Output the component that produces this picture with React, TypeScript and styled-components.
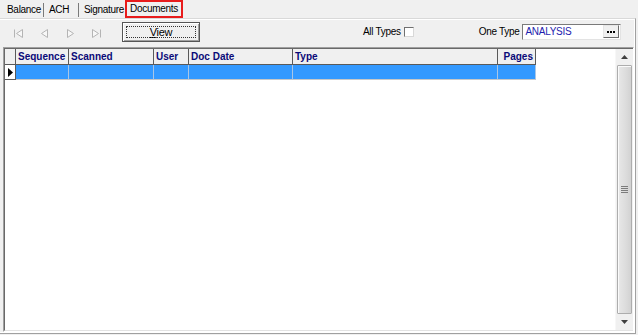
import React from 'react'
import styled, { createGlobalStyle } from 'styled-components'

const GlobalStyle = createGlobalStyle`
  html, body {
    margin: 0;
    padding: 0;
    background: #f0f0f0;
  }
  body {
    font-family: "Liberation Sans", Arial, sans-serif;
    font-size: 10px;
    letter-spacing: -0.3px;
    color: #000;
    white-space: nowrap;
  }
`

const columns = [
  { label: 'Sequence', width: 53 },
  { label: 'Scanned', width: 85 },
  { label: 'User', width: 35 },
  { label: 'Doc Date', width: 104 },
  { label: 'Type', width: 205 },
  { label: 'Pages', width: 38, align: 'right' }
]

const tabs = [
  { label: 'Balance', width: 41, pad: 4, divider: true },
  { label: 'ACH', width: 35, pad: 5, divider: true },
  { label: 'Signature', width: 46, pad: 5 },
  { label: 'Documents', width: 58, active: true }
]

const StyledWindow = styled('div')`
  width: 638px;
  height: 335px;
  display: flex;
  flex-direction: column;
  background: #f0f0f0;
  overflow: hidden;
`

const StyledTabStrip = styled('div')`
  height: 18px;
  display: flex;
  align-items: flex-start;
  padding-left: 3px;
`

const StyledTab = styled('div')<{ pad?: number; w: number; divider?: boolean }>`
  width: ${(p) => p.w}px;
  box-sizing: border-box;
  height: 14px;
  margin-top: 3px;
  padding-left: ${(p) => p.pad || 0}px;
  line-height: 14px;
  border-right: ${(p) => (p.divider ? '1px solid #7a7a7a' : 'none')};
`

const StyledActiveTab = styled('div')<{ w: number }>`
  width: ${(p) => p.w}px;
  box-sizing: border-box;
  height: 18px;
  border: 2px solid #e81c1c;
  display: flex;
  align-items: flex-start;
  justify-content: center;
  padding-top: 1px;
  line-height: 12px;
`

const StyledPanel = styled('div')`
  flex: 1;
  display: flex;
  flex-direction: column;
  border-top: 1px solid #d9d9d9;
  border-right: 1px solid #a0a0a0;
  border-bottom: 1px solid #a0a0a0;
  box-shadow: inset 0 1px 0 #ffffff, inset -1px -1px 0 #ffffff;
  margin-right: 2px;
  margin-bottom: 1px;
  padding: 0 1px 1px 3px;
`

const StyledToolbar = styled('div')`
  height: 28px;
  display: flex;
  align-items: center;
  padding-left: 11px;
`

const StyledNavButton = styled('div')`
  width: 26px;
  height: 16px;
  display: flex;
  align-items: center;
  justify-content: flex-start;
`

const StyledViewButton = styled('div')`
  margin-left: 4px;
  width: 78px;
  height: 20px;
  box-sizing: border-box;
  border: 1px solid #555;
  background: #f0f0f0;
  box-shadow: inset 1px 1px 0 #fff, inset -1px -1px 0 #a0a0a0;
  display: flex;
  align-items: center;
  justify-content: center;
  position: relative;
  margin-top: -3px;
  font-size: 11px;

  &::after {
    content: '';
    position: absolute;
    inset: 3px;
    border: 1px dotted #333;
  }

  u {
    text-decoration: underline;
  }
`

const StyledCheckLabel = styled('label')`
  margin-left: 163px;
  display: flex;
  align-items: center;
  gap: 3px;
  margin-top: -3px;
`

const StyledCheckbox = styled('span')`
  width: 10px;
  height: 10px;
  box-sizing: border-box;
  border: 1px solid #707070;
  border-right-color: #d8d8d8;
  border-bottom-color: #d8d8d8;
  background: #fff;
`

const StyledTypeField = styled('div')`
  margin-left: 65px;
  display: flex;
  align-items: center;
  gap: 3px;
  margin-top: -3px;
`

const StyledInput = styled('div')`
  width: 99px;
  height: 16px;
  box-sizing: border-box;
  border: 1px solid #7a7a7a;
  border-right-color: #e3e3e3;
  border-bottom-color: #e3e3e3;
  background: #fff;
  display: flex;
  align-items: center;
  padding-left: 2px;
  padding-right: 1px;
  color: #1d1dae;
`

const StyledEllipsis = styled('div')`
  margin-left: auto;
  width: 16px;
  height: 13px;
  box-sizing: border-box;
  border: 1px solid #6a6a6a;
  border-top-color: #e6e6e6;
  border-left-color: #e6e6e6;
  background: #f0f0f0;
  display: flex;
  align-items: center;
  justify-content: center;
`

const StyledGrid = styled('div')`
  flex: 1;
  display: flex;
  border-top: 1px solid #a0a0a0;
  border-left: 1px solid #a0a0a0;
  border-right: 1px solid #ffffff;
  border-bottom: 1px solid #ffffff;
`

const StyledGridInner = styled('div')`
  flex: 1;
  display: flex;
  border-top: 1px solid #696969;
  border-left: 1px solid #696969;
  border-bottom: 1px solid #e3e3e3;
  background: #fff;
`

const StyledTable = styled('div')`
  flex: 1;
  display: flex;
  flex-direction: column;
`

const StyledRow = styled('div')<{ header?: boolean }>`
  display: flex;
  height: ${(p) => (p.header ? 16 : 15)}px;
`

const StyledHeaderCell = styled('div')<{ w: number; align?: string }>`
  width: ${(p) => p.w}px;
  box-sizing: border-box;
  background: #f0f0f0;
  border-right: 1px solid #5a5a5a;
  border-bottom: 1px solid #5a5a5a;
  color: #0a0a78;
  font-weight: bold;
  letter-spacing: 0;
  padding: 0 2px;
  overflow: hidden;
  display: flex;
  align-items: center;
  justify-content: ${(p) => (p.align === 'right' ? 'flex-end' : 'flex-start')};
`

const StyledDataCell = styled('div')<{ w: number }>`
  width: ${(p) => p.w}px;
  box-sizing: border-box;
  background: #3399ff;
  border-right: 1px solid #a9c6e6;
  border-bottom: 1px solid #c8c8c8;
`

const StyledIndicator = styled('div')<{ header?: boolean }>`
  width: 11px;
  box-sizing: border-box;
  border-right: 1px solid #5a5a5a;
  border-bottom: 1px solid #5a5a5a;
  display: flex;
  align-items: center;
  justify-content: center;
  background: ${(p) => (p.header ? '#f0f0f0' : '#ffffff')};
`

const StyledScrollbar = styled('div')`
  width: 17px;
  display: flex;
  flex-direction: column;
  background: #f0f0f0;
  border-left: 1px solid #f7f7f7;
`

const StyledArrowButton = styled('div')`
  height: 16px;
  display: flex;
  align-items: center;
  justify-content: center;
`

const StyledThumb = styled('div')`
  flex: 1;
  margin: 0 1px;
  box-sizing: border-box;
  border: 1px solid #adadad;
  border-radius: 1px;
  background: linear-gradient(to right, #e8e8e8, #dcdcdc 60%, #d2d2d2);
  box-shadow: inset 1px 1px 0 #fafafa;
  display: flex;
  align-items: center;
  justify-content: center;
`

function NavIcon({ kind }: { kind: 'first' | 'prior' | 'next' | 'last' }) {
  const stroke = '#b4b4b4'
  return (
    <svg width="9" height="9" viewBox="0 0 9 9">
      {kind === 'first' && (
        <>
          <path d="M0.5 0.5 V8.5" stroke={stroke} fill="none" />
          <path d="M8.5 0.5 L2.5 4.5 L8.5 8.5 Z" stroke={stroke} fill="#f7f7f7" />
        </>
      )}
      {kind === 'prior' && <path d="M7.5 0.5 L1.5 4.5 L7.5 8.5 Z" stroke={stroke} fill="#f7f7f7" />}
      {kind === 'next' && <path d="M1.5 0.5 L7.5 4.5 L1.5 8.5 Z" stroke={stroke} fill="#f7f7f7" />}
      {kind === 'last' && (
        <>
          <path d="M0.5 0.5 L6.5 4.5 L0.5 8.5 Z" stroke={stroke} fill="#f7f7f7" />
          <path d="M8.5 0.5 V8.5" stroke={stroke} fill="none" />
        </>
      )}
    </svg>
  )
}

function Arrow({ up }: { up?: boolean }) {
  return (
    <svg width="7" height="4" viewBox="0 0 7 4">
      <path d={up ? 'M3.5 0 L7 4 L0 4 Z' : 'M0 0 L7 0 L3.5 4 Z'} fill="#404040" />
    </svg>
  )
}

function Grip() {
  return (
    <svg width="7" height="7" viewBox="0 0 7 7">
      {[0.5, 2.5, 4.5, 6.5].map((y) => (
        <path key={y} d={`M0 ${y} H7`} stroke="#7c7c7c" strokeWidth="1" />
      ))}
    </svg>
  )
}

function Dots() {
  return (
    <svg width="8" height="2" viewBox="0 0 8 2">
      {[0, 3, 6].map((x) => (
        <rect key={x} x={x} y="0" width="2" height="2" fill="#000" />
      ))}
    </svg>
  )
}

function Grid() {
  return (
    <StyledGrid>
      <StyledGridInner>
        <StyledTable>
          <StyledRow header>
            <StyledIndicator header />
            {columns.map((c) => (
              <StyledHeaderCell key={c.label} w={c.width} align={c.align}>
                {c.label}
              </StyledHeaderCell>
            ))}
          </StyledRow>
          <StyledRow>
            <StyledIndicator>
              <svg width="5" height="9" viewBox="0 0 5 9">
                <path d="M0 0 L5 4.5 L0 9 Z" fill="#000" />
              </svg>
            </StyledIndicator>
            {columns.map((c) => (
              <StyledDataCell key={c.label} w={c.width} />
            ))}
          </StyledRow>
        </StyledTable>
        <StyledScrollbar>
          <StyledArrowButton>
            <Arrow up />
          </StyledArrowButton>
          <StyledThumb>
            <Grip />
          </StyledThumb>
          <StyledArrowButton>
            <Arrow />
          </StyledArrowButton>
        </StyledScrollbar>
      </StyledGridInner>
    </StyledGrid>
  )
}

function App() {
  return (
    <StyledWindow>
      <GlobalStyle />
      <StyledTabStrip>
        {tabs.map((t) =>
          t.active ? (
            <StyledActiveTab key={t.label} w={t.width}>
              {t.label}
            </StyledActiveTab>
          ) : (
            <StyledTab key={t.label} w={t.width} pad={t.pad} divider={t.divider}>
              {t.label}
            </StyledTab>
          )
        )}
      </StyledTabStrip>
      <StyledPanel>
        <StyledToolbar>
          <StyledNavButton><NavIcon kind="first" /></StyledNavButton>
          <StyledNavButton><NavIcon kind="prior" /></StyledNavButton>
          <StyledNavButton><NavIcon kind="next" /></StyledNavButton>
          <StyledNavButton><NavIcon kind="last" /></StyledNavButton>
          <StyledViewButton>
            <span><u>V</u>iew</span>
          </StyledViewButton>
          <StyledCheckLabel>
            All Types
            <StyledCheckbox />
          </StyledCheckLabel>
          <StyledTypeField>
            One Type
            <StyledInput>
              ANALYSIS
              <StyledEllipsis><Dots /></StyledEllipsis>
            </StyledInput>
          </StyledTypeField>
        </StyledToolbar>
        <Grid />
      </StyledPanel>
    </StyledWindow>
  )
}

export default App
